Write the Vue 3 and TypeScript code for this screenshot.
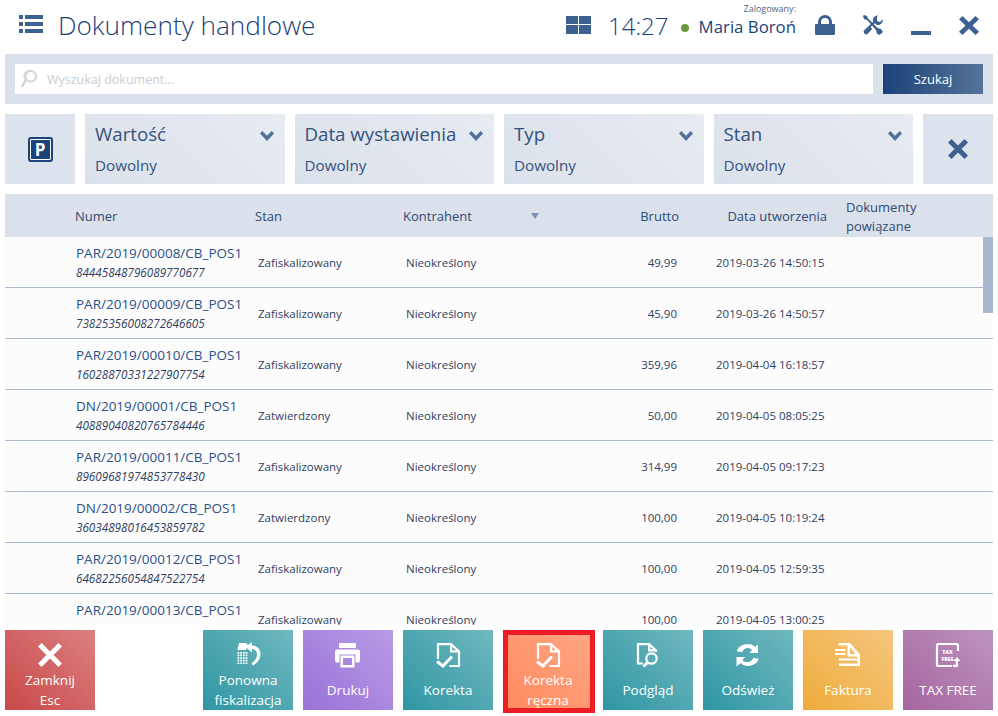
<script setup lang="ts">
interface Doc {
  numer: string;
  kod: string;
  stan: string;
  brutto: string;
  data: string;
}

const filters = ["Wartość", "Data wystawienia", "Typ", "Stan"];

const docs: Doc[] = [
  { numer: "PAR/2019/00008/CB_POS1", kod: "84445848796089770677", stan: "Zafiskalizowany", brutto: "49,99", data: "2019-03-26 14:50:15" },
  { numer: "PAR/2019/00009/CB_POS1", kod: "73825356008272646605", stan: "Zafiskalizowany", brutto: "45,90", data: "2019-03-26 14:50:57" },
  { numer: "PAR/2019/00010/CB_POS1", kod: "16028870331227907754", stan: "Zafiskalizowany", brutto: "359,96", data: "2019-04-04 16:18:57" },
  { numer: "DN/2019/00001/CB_POS1", kod: "40889040820765784446", stan: "Zatwierdzony", brutto: "50,00", data: "2019-04-05 08:05:25" },
  { numer: "PAR/2019/00011/CB_POS1", kod: "89609681974853778430", stan: "Zafiskalizowany", brutto: "314,99", data: "2019-04-05 09:17:23" },
  { numer: "DN/2019/00002/CB_POS1", kod: "36034898016453859782", stan: "Zatwierdzony", brutto: "100,00", data: "2019-04-05 10:19:24" },
  { numer: "PAR/2019/00012/CB_POS1", kod: "64682256054847522754", stan: "Zafiskalizowany", brutto: "100,00", data: "2019-04-05 12:59:35" },
  { numer: "PAR/2019/00013/CB_POS1", kod: "", stan: "Zafiskalizowany", brutto: "100,00", data: "2019-04-05 13:00:25" },
];

const actions = [
  { key: "fiskal", label: ["Ponowna", "fiskalizacja"], tone: "teal" },
  { key: "druk", label: ["Drukuj"], tone: "purple" },
  { key: "korekta", label: ["Korekta"], tone: "teal" },
  { key: "reczna", label: ["Korekta", "ręczna"], tone: "coral" },
  { key: "podglad", label: ["Podgląd"], tone: "teal" },
  { key: "odswiez", label: ["Odśwież"], tone: "teal" },
  { key: "faktura", label: ["Faktura"], tone: "gold" },
  { key: "taxfree", label: ["TAX FREE"], tone: "mauve" },
];

// siatka kropek na paragonie w ikonie fiskalizacji
const receiptDots: string[] = [];
for (let r = 0; r < 5; r++) {
  for (let c = 0; c < 4; c++) {
    receiptDots.push(`M${2.5 + c * 2.7} ${10 + r * 2.6}h1.800v1.700h-1.800z`);
  }
}
const receiptPath = receiptDots.join("");
</script>

<template>
  <div class="app">
    <header class="topbar">
      <svg class="menu-icon" width="24" height="18" viewBox="0 0 24 18">
        <path d="M0 0h4v4H0zM6 0h18v4H6zM0 7h4v4H0zM6 7h18v4H6zM0 14h4v4H0zM6 14h18v4H6z" />
      </svg>
      <h1 class="title">Dokumenty handlowe</h1>
      <svg class="tiles-icon" width="25" height="18" viewBox="0 0 25 18">
        <path d="M0 0h12v8H0zM13 0h12v8H13zM0 9h12v9H0zM13 9h12v9H13z" />
      </svg>
      <span class="clock">14:27</span>
      <span class="dot"></span>
      <div class="user">
        <span class="user-label">Zalogowany:</span>
        <span class="user-name">Maria Boroń</span>
      </div>
      <svg class="lock-icon" width="20" height="20" viewBox="0 0 20 20">
        <path d="M3 9V7a7 7 0 0 1 14 0v2h2a1 1 0 0 1 1 1v8.500a1.500 1.500 0 0 1-1.500 1.500h-17A1.500 1.500 0 0 1 0 18.500V10a1 1 0 0 1 1-1zM6 9h8V7a4 4 0 0 0-8 0z" />
      </svg>
      <svg class="tools-icon" width="20" height="20" viewBox="0 0 20 20">
        <path d="M1 0 0 1l1 3 3 1 9 10 .8 3.500L16.500 20 20 17l-2-3-3.400-1L5 3.500 4 1zM14.600.2a5 5 0 0 0-4.400 6.600L1 15.600a2.600 2.600 0 0 0 3.500 3.500l4.700-5-1.700-2L12 8.200l1.500 1.600a5 5 0 0 0 6.300-5.600L17 7l-3-1V3z" />
      </svg>
      <span class="minimize"></span>
      <svg class="close-icon" width="20" height="19" viewBox="0 0 20 20" preserveAspectRatio="none">
        <path d="M3.500 0 10 6.500 16.500 0 20 3.500 13.500 10 20 16.500 16.500 20 10 13.500 3.500 20 0 16.500 6.500 10 0 3.500z" />
      </svg>
    </header>

    <section class="search">
      <div class="search-box">
        <svg width="18" height="18" viewBox="0 0 18 20">
          <path d="M11 0a7 7 0 1 1-4.600 12.300L2.800 18.600a1.500 1.500 0 0 1-2.500-1.500l3.800-6.200A7 7 0 0 1 11 0zm0 2.200a4.800 4.800 0 1 0 0 9.600 4.800 4.800 0 0 0 0-9.600z" />
        </svg>
        <span>Wyszukaj dokument...</span>
      </div>
      <button class="search-btn">Szukaj</button>
    </section>

    <section class="filters">
      <div class="tile">
        <span class="park-icon">P</span>
      </div>
      <div v-for="f in filters" :key="f" class="filter">
        <div class="filter-head">
          <span class="filter-name">{{ f }}</span>
          <svg width="14" height="10" viewBox="0 0 14 10">
            <path d="M0 2.500 2.300 0 7 4.800 11.700 0 14 2.500 7 10z" />
          </svg>
        </div>
        <span class="filter-value">Dowolny</span>
      </div>
      <div class="tile">
        <svg class="clear-icon" width="20" height="20" viewBox="0 0 20 20">
          <path d="M3.500 0 10 6.500 16.500 0 20 3.500 13.500 10 20 16.500 16.500 20 10 13.500 3.500 20 0 16.500 6.500 10 0 3.500z" />
        </svg>
      </div>
    </section>

    <section class="table">
      <div class="thead">
        <span>Numer</span>
        <span>Stan</span>
        <span class="th-contractor">Kontrahent<i class="sort"></i></span>
        <span class="right">Brutto</span>
        <span class="right">Data utworzenia</span>
        <span class="th-related">Dokumenty powiązane</span>
      </div>
      <div class="tbody">
        <div v-for="d in docs" :key="d.numer" class="row">
          <div class="cell-num">
            <div class="numer">{{ d.numer }}</div>
            <div class="kod">{{ d.kod }}</div>
          </div>
          <div class="cell">{{ d.stan }}</div>
          <div class="cell">Nieokreślony</div>
          <div class="cell right">{{ d.brutto }}</div>
          <div class="cell date">{{ d.data }}</div>
        </div>
        <div class="scroll-thumb"></div>
      </div>
    </section>

    <footer class="actions">
      <button class="action red first">
        <svg class="a-icon x-icon" width="24" height="24" viewBox="0 0 20 20">
          <path d="M3 0 10 7 17 0 20 3 13 10 20 17 17 20 10 13 3 20 0 17 7 10 0 3z" />
        </svg>
        <span>Zamknij</span>
        <span>Esc</span>
      </button>
      <button v-for="a in actions" :key="a.key" class="action" :class="[a.tone, { multi: a.label.length > 1 }]">
        <svg class="a-icon" width="26" height="26" viewBox="0 0 26 26">
          <template v-if="a.key === 'fiskal'">
            <path d="M4 1h7l3 3-3.500 4H2.500z" />
            <path :d="receiptPath" />
            <path d="M17 0v3.500c4.500 0 8.500 3 8.500 8.500S22 21 18 23.500L16.500 21c2.500-1.500 5.500-4 5.500-9 0-3-2.500-5-5-5v3.500L10.500 5z" />
          </template>
          <template v-else-if="a.key === 'druk'">
            <path fill-rule="evenodd" d="M5 1h15a1 1 0 0 1 1 1v4H4V2a1 1 0 0 1 1-1zM2 7.500h21a2 2 0 0 1 2 2v9a2 2 0 0 1-2 2h-2.500v-8h-16v8H2a2 2 0 0 1-2-2v-9a2 2 0 0 1 2-2zM5.500 13.500h14v12h-14zM8 16v7h9v-7z" />
          </template>
          <template v-else-if="a.key === 'korekta' || a.key === 'reczna'">
            <path class="line" d="M3 17V2.100h13L24 9.500V24H14.500" />
            <path d="M15 1.500h2.200v6.800H24v2.200h-9z" />
            <path class="line thick" d="M2 19.500l6 4.500 9-9.500" />
          </template>
          <template v-else-if="a.key === 'podglad'">
            <path class="line" d="M3 18V2.100h11L21 8.500V10M3 18v3.500h5" />
            <path d="M13 1.500h2.200v5.800H21v2.200h-8z" />
            <circle class="line" cx="16.500" cy="16.500" r="5.200" />
            <path class="line thick" d="M12.500 20.500 8.500 24.500" />
          </template>
          <template v-else-if="a.key === 'odswiez'">
            <path d="M13 2c3 0 5.300 1 7 3l3-2.800V11h-8.700l2.900-2.900C16 6.700 14.600 6 13 6c-2.800 0-5 1.700-6 4.300L1.800 9.200C3 5 7.500 2 13 2zM1.500 15h8.700l-2.900 2.900c1.200 1.400 3.100 2.100 5.200 2.100 2.800 0 5-1.700 6-4.300l5.200 1.100C22.500 21 18 24 13 24c-3 0-5.500-1-7.500-3l-4 3.500z" />
          </template>
          <template v-else-if="a.key === 'faktura'">
            <path fill-rule="evenodd" d="M3.500 1H15l10 11.500V24h-2.500V14.500h-10V3.500h-9zM15 5.500v6.500h5.500z" />
            <path d="M0 7h10.500v2H0zM0 11h10.500v2H0zM4 16.500h18v2H4zM4 21.500h18V24H4z" />
          </template>
          <template v-else-if="a.key === 'taxfree'">
            <path class="line" d="M23 9V3.500a1.500 1.500 0 0 0-1.500-1.500h-18A1.500 1.500 0 0 0 2 3.500v19A1.500 1.500 0 0 0 3.500 24H17" />
            <path d="M22 15l3.500 4h-2.500v6h-5v-2.200h2.800V19H18.500z" />
            <text class="tax-text" x="12.500" y="11.500">TAX</text>
            <text class="tax-text" x="12.500" y="18.800">FREE</text>
          </template>
        </svg>
        <span v-for="line in a.label" :key="line">{{ line }}</span>
      </button>
    </footer>
  </div>
</template>

<style scoped>
.app {
  width: 998px;
  height: 716px;
  display: flex;
  flex-direction: column;
  overflow: hidden;
  background: #fff;
  font-family: "Open Sans", "Noto Sans", sans-serif;
  color: #2f4a75;
}

.topbar {
  height: 54px;
  flex: none;
  display: flex;
  align-items: flex-start;
  padding-left: 19px;
}

.topbar svg {
  fill: #3c6090;
  flex: none;
}

.menu-icon {
  margin-top: 15px;
}

.title {
  margin: 7px 0 0 15px;
  font-size: 26.200px;
  line-height: 36px;
  font-weight: 300;
  color: #1d4279;
  flex: 1;
  white-space: nowrap;
}

.tiles-icon {
  margin-top: 16px;
}

.clock {
  margin: 8px 0 0 17px;
  font-size: 24px;
  line-height: 36px;
  font-weight: 300;
  color: #1d4279;
  width: 60px;
}

.dot {
  width: 8px;
  height: 8px;
  border-radius: 50%;
  background: #6b9a3e;
  margin: 24px 0 0 13px;
}

.user {
  margin: 3px 0 0 10px;
  width: 97px;
  display: flex;
  flex-direction: column;
  align-items: flex-end;
}

.user-label {
  font-size: 9px;
  line-height: 12px;
  color: #4d6488;
}

.user-name {
  font-size: 16.800px;
  line-height: 24px;
  color: #1d4279;
  white-space: nowrap;
}

.lock-icon {
  margin: 15px 0 0 19px;
}

.tools-icon {
  margin: 15px 0 0 28px;
}

.minimize {
  width: 20px;
  height: 4px;
  background: #3c6090;
  margin: 31px 0 0 28px;
}

.close-icon {
  margin: 16px 19px 0 28px;
}

.search {
  height: 50px;
  flex: none;
  margin: 0 5px;
  padding: 10px;
  box-sizing: border-box;
  background: #dbe1ea;
  display: flex;
  gap: 10px;
}

.search-box {
  flex: 1;
  background: #fff;
  display: flex;
  align-items: center;
  gap: 9px;
  padding-left: 5px;
  font-size: 12.500px;
  color: #c9cdd2;
}

.search-box svg {
  fill: #d6d6d6;
}

.search-btn {
  width: 100px;
  border: 0;
  padding: 0;
  background: linear-gradient(90deg, #1b4379, #557399);
  color: #fff;
  font: inherit;
  font-size: 13px;
}

.filters {
  height: 70px;
  flex: none;
  margin: 10px 5px;
  display: flex;
  gap: 10px;
}

.tile {
  width: 70px;
  flex: none;
  background: #dde3ec;
  display: flex;
  align-items: center;
  justify-content: center;
}

.park-icon {
  width: 25px;
  height: 25px;
  box-sizing: border-box;
  border-radius: 3px;
  background: #1c437a;
  border: 2px solid #1c437a;
  box-shadow: inset 0 0 0 1px #fff;
  color: #fff;
  font-size: 17px;
  font-weight: 700;
  line-height: 21px;
  text-align: center;
}

.clear-icon {
  fill: #3c6090;
}

.filter {
  flex: 1;
  box-sizing: border-box;
  padding: 6px 10px 0;
  background: linear-gradient(45deg, #dbe1ea, #e7ebf2);
  display: flex;
  flex-direction: column;
}

.filter-head {
  display: flex;
  align-items: center;
  justify-content: space-between;
  height: 27px;
}

.filter-head svg {
  fill: #4f719c;
  flex: none;
  margin: 4px 1px 0 0;
}

.filter-name {
  font-size: 18.700px;
  color: #34527f;
  white-space: nowrap;
}

.filter-value {
  margin-top: 8px;
  font-size: 15.200px;
  color: #34527f;
}

.table {
  flex: 1;
  min-height: 0;
  margin: 0 5px;
  display: flex;
  flex-direction: column;
}

.thead {
  height: 43px;
  flex: none;
  background: #dbe1ea;
  display: grid;
  grid-template-columns: 180px 148px 140px 136px 148px 1fr;
  padding-left: 70px;
  align-items: center;
  font-size: 13px;
  color: #2f4a75;
}

.th-contractor {
  position: relative;
}

.sort {
  position: absolute;
  left: 128px;
  top: 6px;
  border: 4px solid transparent;
  border-top: 6px solid #7d90ae;
  border-bottom: 0;
}

.th-related {
  line-height: 19px;
  padding: 2px 0 0 19px;
  width: 100px;
}

.right {
  text-align: right;
}

.tbody {
  flex: 1;
  min-height: 0;
  background: #fcfcfc;
  overflow: hidden;
  position: relative;
}

.row {
  height: 51px;
  box-sizing: border-box;
  border-bottom: 1px solid #a9b8cf;
  display: grid;
  grid-template-columns: 182px 148px 137px 134px 1fr;
  padding-left: 71px;
  align-items: center;
  font-size: 11.500px;
  color: #30415f;
}

.cell {
  white-space: nowrap;
}

.cell.date {
  padding-left: 39px;
}

.numer {
  font-size: 13.500px;
  line-height: 21px;
  color: #2c5088;
  white-space: nowrap;
}

.kod {
  font-size: 11.700px;
  font-style: italic;
  line-height: 17px;
  min-height: 17px;
}

.scroll-thumb {
  position: absolute;
  top: 0;
  right: 0;
  width: 10px;
  height: 76px;
  background: #a9b8cf;
}

.actions {
  height: 80px;
  flex: none;
  margin: 5px 5px 6px;
  display: flex;
  gap: 10px;
}

.action {
  width: 90px;
  box-sizing: border-box;
  border: 0;
  padding: 12px 0 0;
  color: #fff;
  font: inherit;
  font-size: 13.500px;
  line-height: 20px;
  display: flex;
  flex-direction: column;
  align-items: center;
  position: relative;
}

.action.first {
  margin-right: 98px;
}

.a-icon {
  flex: none;
  fill: #fff;
  margin-bottom: 12px;
}

.multi .a-icon {
  margin-bottom: 2px;
}

.x-icon {
  margin: 1px 0 3px;
}

.line {
  fill: none;
  stroke: #fff;
  stroke-width: 2.200;
}

.line.thick {
  stroke-width: 3;
}

.red {
  background: linear-gradient(45deg, #c84848, #db8080);
}

.teal {
  background: linear-gradient(45deg, #2f96a3, #70b8bf);
}

.purple {
  background: linear-gradient(45deg, #9a72d8, #b89be6);
}

.coral {
  background: linear-gradient(45deg, #ff8a5c, #ffa686);
}

/* czerwona ramka zaznaczenia wystaje poza kafelek */
.coral::after {
  content: "";
  position: absolute;
  top: 0;
  left: 0;
  width: 92px;
  height: 83px;
  box-sizing: border-box;
  border: 5px solid #ee1c25;
}

.gold {
  background: linear-gradient(45deg, #efab3c, #f4c67e);
}

.mauve {
  background: linear-gradient(45deg, #a5669f, #bd93bf);
}

.tax-text {
  font-size: 5.200px;
  font-weight: 800;
  fill: #fff;
  text-anchor: middle;
}
</style>
